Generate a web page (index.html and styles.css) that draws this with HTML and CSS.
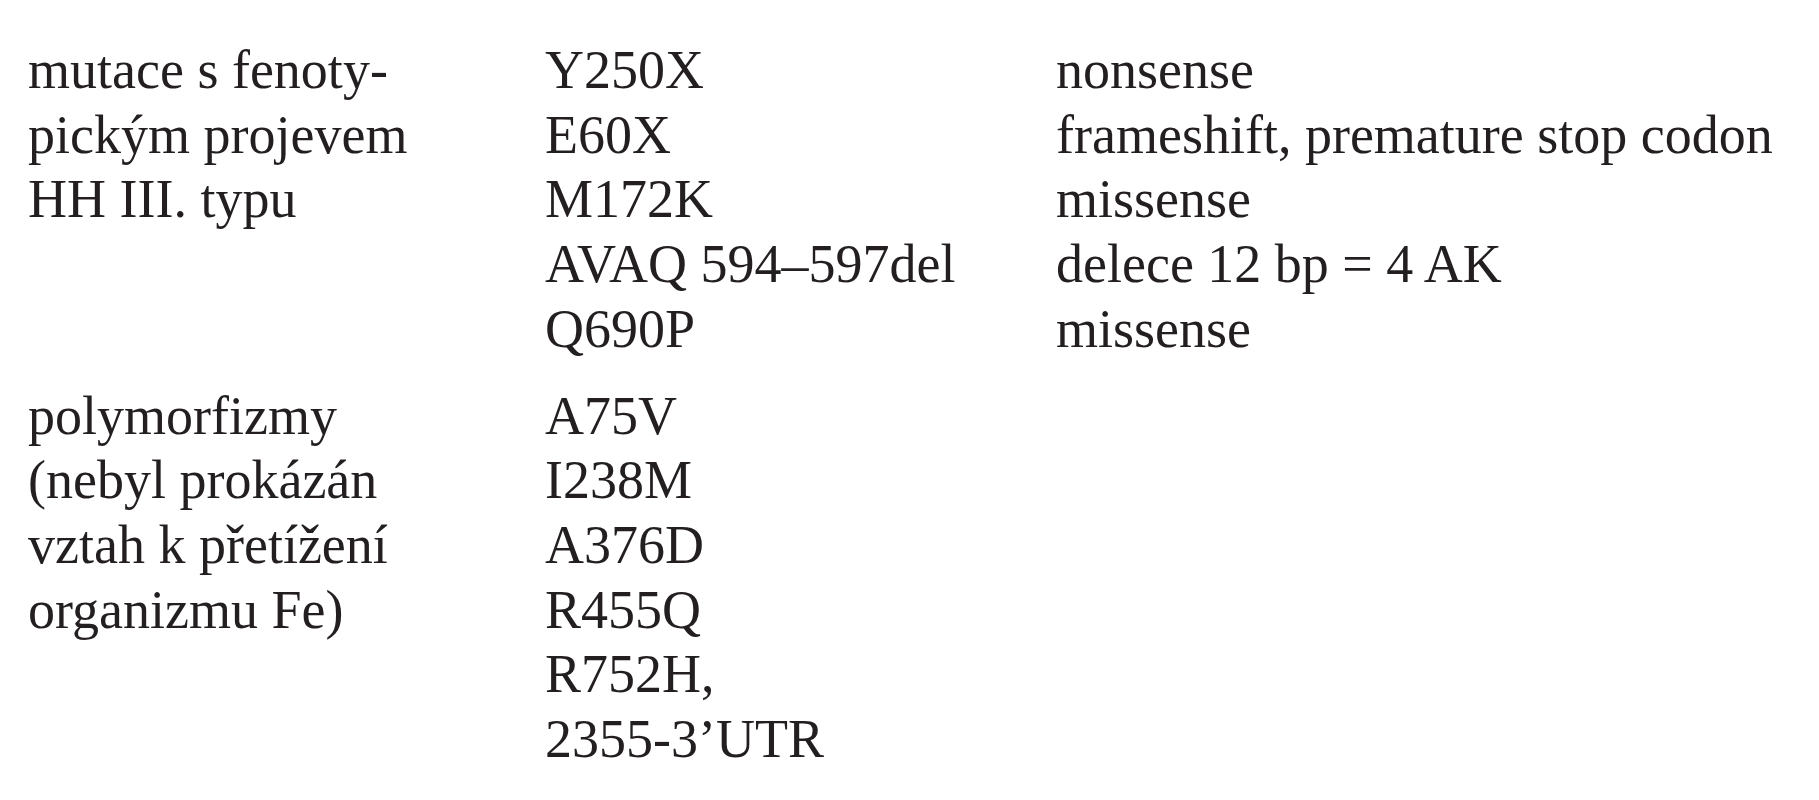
FILE: index.html
```html
<!DOCTYPE html>
<html lang="cs">
<head>
<meta charset="utf-8">
<title>Mutace</title>
<link rel="stylesheet" href="styles.css">
</head>
<body>
<div class="table">
  <div class="group">
    <div class="cell c1">mutace s fenoty-<br>pickým projevem<br>HH III. typu</div>
    <div class="cell c2">Y250X<br>E60X<br>M172K<br>AVAQ 594–597del<br>Q690P</div>
    <div class="cell c3">nonsense<br>frameshift, premature stop codon<br>missense<br>delece 12 bp = 4 AK<br>missense</div>
  </div>
  <div class="group">
    <div class="cell c1">polymorfizmy<br>(nebyl prokázán<br>vztah k přetížení<br>organizmu Fe)</div>
    <div class="cell c2">A75V<br>I238M<br>A376D<br>R455Q<br>R752H,<br>2355-3’UTR</div>
    <div class="cell c3"></div>
  </div>
</div>
</body>
</html>
```
FILE: styles.css
```css
html, body {
  margin: 0;
  padding: 0;
  background: #ffffff;
}
body {
  font-family: "Liberation Serif", "DejaVu Serif", serif;
  font-size: 54px;
  line-height: 64.7px;
  color: #231f20;
}
.table {
  display: flex;
  flex-direction: column;
  gap: 22px;
  padding: 38px 0 0 28px;
}
.group {
  display: grid;
  grid-template-columns: 517px 511px auto;
}
.cell {
  white-space: nowrap;
}
```
